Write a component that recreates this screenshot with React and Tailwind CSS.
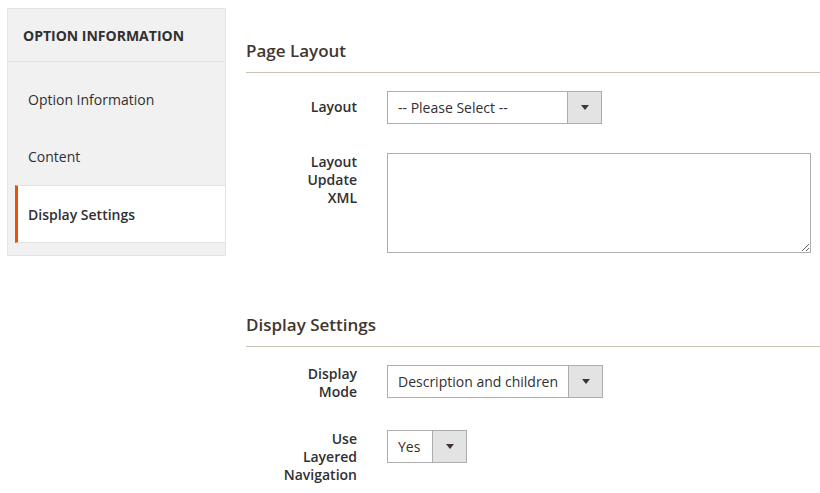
import React from "react";

const font = { fontFamily: '"Open Sans", "Noto Sans", sans-serif' };

function Arrow() {
  return (
    <svg width="8" height="5" viewBox="0 0 8 5" className="block">
      <path d="M0 0 L8 0 L4 5 Z" fill="#41362f" />
    </svg>
  );
}

function Select({ value, width }) {
  return (
    <div
      className="flex h-[33px] border border-[#adadad] bg-white"
      style={{ width }}
    >
      <div className="flex-1 flex items-center pl-[10px] text-[14px] text-[#303030] leading-none">
        {value}
      </div>
      <div className="w-[34px] flex items-center justify-center bg-[#e3e3e3] border-l border-[#adadad]">
        <Arrow />
      </div>
    </div>
  );
}

function Row({ label, labelPt, children }) {
  return (
    <div className="flex items-start">
      <div
        className="w-[80px] ml-[31px] text-right text-[14px] leading-[18px] font-semibold text-[#303030]"
        style={{ paddingTop: labelPt }}
      >
        {label}
      </div>
      <div className="ml-[30px]">{children}</div>
    </div>
  );
}

function Title({ children }) {
  return (
    <div className="text-[17px] leading-[22px] font-semibold text-[#41362f] pb-[10px] border-b border-[#cac3b4]">
      {children}
    </div>
  );
}

export default function App() {
  return (
    <div className="w-[820px] h-[493px] bg-white flex overflow-hidden" style={font}>
      <div className="ml-[7px] mt-[8px] w-[219px] h-[248px] border border-[#e3e3e3] bg-[#f1f1f1] flex flex-col shrink-0">
        <div className="h-[53px] border-b border-[#e3e3e3] flex items-center pl-[15px] text-[14px] font-bold text-[#303030] uppercase">
          Option Information
        </div>
        <div className="pt-[9px] ml-[7px]">
          <div className="h-[57px] flex items-center pl-[13px] text-[14px] text-[#303030]">
            Option Information
          </div>
          <div className="h-[57px] flex items-center pl-[13px] text-[14px] text-[#303030]">
            Content
          </div>
          <div className="h-[58px] flex items-center pl-[10px] bg-white border-y border-[#e3e3e3] border-l-[3px] border-l-[#eb5202] text-[14px] font-semibold text-[#303030]">
            Display Settings
          </div>
        </div>
      </div>

      <div className="ml-[20px] flex-1 pt-[40px]">
        <Title>Page Layout</Title>
        <div className="mt-[18px] flex flex-col gap-[29px]">
          <Row label="Layout" labelPt={7}>
            <Select value="-- Please Select --" width={215} />
          </Row>
          <Row label="Layout Update XML" labelPt={0}>
            <textarea className="block w-[424px] h-[100px] border border-[#adadad] bg-white outline-none" />
          </Row>
        </div>

        <div className="mt-[61px]">
          <Title>Display Settings</Title>
        </div>
        <div className="mt-[18px] flex flex-col gap-[29px]">
          <Row label="Display Mode" labelPt={0}>
            <Select value="Description and children" width={216} />
          </Row>
          <Row label="Use Layered Navigation" labelPt={0}>
            <Select value="Yes" width={80} />
          </Row>
        </div>
      </div>
    </div>
  );
}
